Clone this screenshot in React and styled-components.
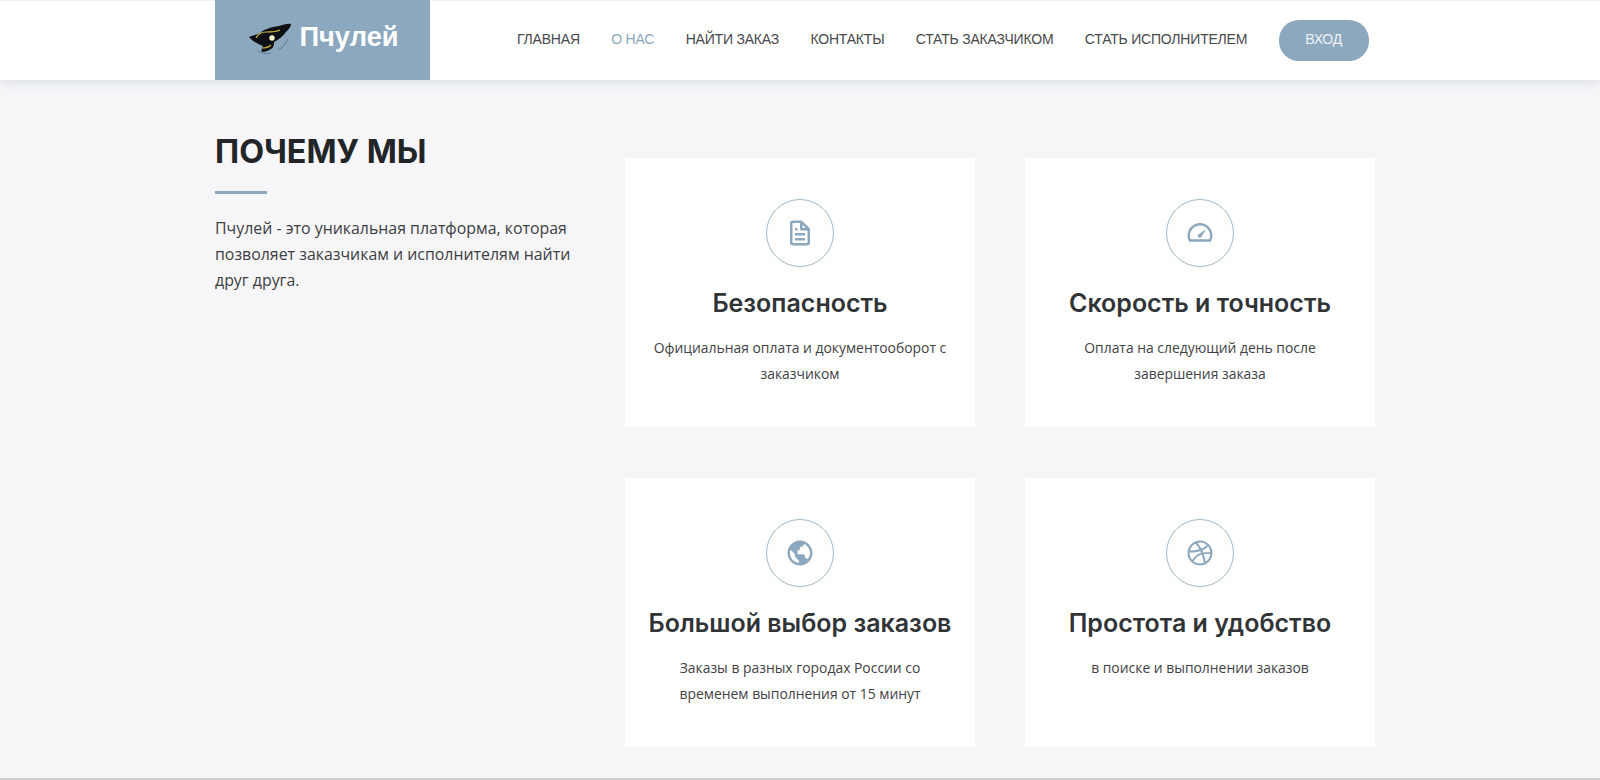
import React from 'react'
import styled, { createGlobalStyle } from 'styled-components'
import { BiFile, BiTachometer, BiWorld, BiLogoDribbble } from 'react-icons/bi'

const GlobalStyle = createGlobalStyle`
  html, body {
    margin: 0;
    padding: 0;
    background: #f6f6f8;
    font-family: "Open Sans", sans-serif;
    color: #444;
  }
`

const Page = styled.div`
  height: 780px;
  display: flex;
  flex-direction: column;
  overflow: hidden;
`

const Header = styled.header`
  height: 80px;
  flex: none;
  background: #fff;
  box-shadow: 0 2px 15px rgba(25, 119, 204, 0.06), 0 2px 10px rgba(0, 0, 0, 0.08);
  border-top: 1px solid #f0f0f0;
  box-sizing: border-box;
  position: relative;
`

const HeaderInner = styled.div`
  width: 1169px;
  margin-left: 215px;
  height: 100%;
  display: flex;
  align-items: center;
`

const Logo = styled.a`
  width: 215px;
  height: 80px;
  margin-top: -1px;
  padding: 0 0 7px 3px;
  box-sizing: border-box;
  flex: none;
  background: #8ca8be;
  display: flex;
  align-items: center;
  justify-content: center;
  gap: 7px;
  color: #fff;
  font: 700 27.3px "Liberation Sans", sans-serif;
`

const BeeIcon = styled.svg`
  margin-top: 5px;
`

const Nav = styled.nav`
  margin-left: 87px;
  display: flex;
  align-items: center;
  gap: 31.4px;
`

const NavLink = styled.a`
  font: 400 14px "Liberation Sans", sans-serif;
  letter-spacing: -0.2px;
  color: ${(p) => (p.$active ? '#8ca8be' : '#47494b')};
  text-transform: uppercase;
  white-space: nowrap;
  margin-bottom: 3px;
`

const LoginButton = styled.a`
  width: 90px;
  height: 41px;
  margin-bottom: 1px;
  padding-bottom: 2px;
  box-sizing: border-box;
  display: flex;
  align-items: center;
  justify-content: center;
  border-radius: 20px;
  background: #8ca8be;
  color: #eef2f6;
  font: 400 14px "Liberation Sans", sans-serif;
  letter-spacing: -0.2px;
`

const Main = styled.main`
  flex: 1;
  width: 1169px;
  margin-left: 215px;
  display: grid;
  grid-template-columns: 410px 750px;
`

const Intro = styled.section`
  padding-top: 50px;
`

const Title = styled.h2`
  margin: 0;
  font: 700 32.3px/44px "Inter", sans-serif;
  color: #222528;
`

const TitleRule = styled.div`
  width: 52px;
  height: 3px;
  margin-top: 17px;
  background: #8ca8be;
`

const Lead = styled.p`
  width: 360px;
  margin: 21px 0 0;
  font-size: 15.9px;
  line-height: 26px;
  color: #3d4043;
`

const Cards = styled.section`
  padding-top: 78px;
  display: grid;
  grid-template-columns: 350px 350px;
  grid-auto-rows: 269px;
  column-gap: 50px;
  row-gap: 51px;
`

const Card = styled.article`
  background: #fff;
  padding: 41px 20px 0;
  box-sizing: border-box;
  text-align: center;
`

const IconRing = styled.div`
  width: 68px;
  height: 68px;
  margin: 0 auto;
  box-sizing: border-box;
  border: 1px solid #9fb6c8;
  border-radius: 50%;
  display: flex;
  align-items: center;
  justify-content: center;
  color: #8ca8be;
  font-size: 30px;
`

const CardTitle = styled.h4`
  margin: 20px 0 0;
  font: 600 25px/32px "Inter", sans-serif;
  color: #313437;
`

const CardText = styled.p`
  margin: 16px 0 0;
  font-size: 13.9px;
  line-height: 26px;
  color: #3f4245;
`

const BottomEdge = styled.div`
  height: 2px;
  flex: none;
  background: #cfcfd1;
`

const BeeLogo = () => (
  <BeeIcon width="43" height="32" viewBox="0 0 43 32" aria-hidden="true">
    <path d="M0 14 C4 12 8 12 11 10 C16 6 22 4 30 3 C34 2 39 0 42 1 C42 4 39 7 37 9 C33 14 29 17 25 19 C25 23 24 25 22 26 C19 28 16 29 13 29 C12 27 13 25 14 23 C9 21 3 18 0 14Z" fill="#0d0f14" />
    <path d="M7 15 C9 11 13 9 17 9 C22 9 27 9 31 7" fill="none" stroke="#cdb73a" strokeWidth="1.2" />
    <path d="M13 25 C17 25 20 24 22 22" fill="none" stroke="#c9b030" strokeWidth="1.2" />
    <circle cx="23" cy="15" r="2.7" fill="#f6f5cf" />
    <path d="M39 16 C37 21 33 25 29 27" fill="none" stroke="#46505a" strokeWidth="0.9" opacity="0.6" />
    <path d="M8 27 C12 31 17 31 22 30" fill="none" stroke="#46505a" strokeWidth="0.9" opacity="0.5" />
  </BeeIcon>
)

const navItems = [
  { label: 'Главная' },
  { label: 'О нас', active: true },
  { label: 'Найти заказ' },
  { label: 'Контакты' },
  { label: 'Стать заказчиком' },
  { label: 'Стать исполнителем' },
]

const features = [
  { icon: <BiFile />, title: 'Безопасность', text: 'Официальная оплата и документооборот с заказчиком' },
  { icon: <BiTachometer />, title: 'Скорость и точность', text: 'Оплата на следующий день после завершения заказа' },
  { icon: <BiWorld />, title: 'Большой выбор заказов', text: 'Заказы в разных городах России со временем выполнения от 15 минут' },
  { icon: <BiLogoDribbble />, title: 'Простота и удобство', text: 'в поиске и выполнении заказов' },
]

const App = () => (
  <Page>
    <GlobalStyle />
    <Header>
      <HeaderInner>
        <Logo>
          <BeeLogo />
          Пчулей
        </Logo>
        <Nav>
          {navItems.map((item) => (
            <NavLink key={item.label} $active={item.active}>{item.label}</NavLink>
          ))}
          <LoginButton>ВХОД</LoginButton>
        </Nav>
      </HeaderInner>
    </Header>
    <Main>
      <Intro>
        <Title>ПОЧЕМУ МЫ</Title>
        <TitleRule />
        <Lead>Пчулей - это уникальная платформа, которая позволяет заказчикам и исполнителям найти друг друга.</Lead>
      </Intro>
      <Cards>
        {features.map((f) => (
          <Card key={f.title}>
            <IconRing>{f.icon}</IconRing>
            <CardTitle>{f.title}</CardTitle>
            <CardText>{f.text}</CardText>
          </Card>
        ))}
      </Cards>
    </Main>
    <BottomEdge />
  </Page>
)

export default App
